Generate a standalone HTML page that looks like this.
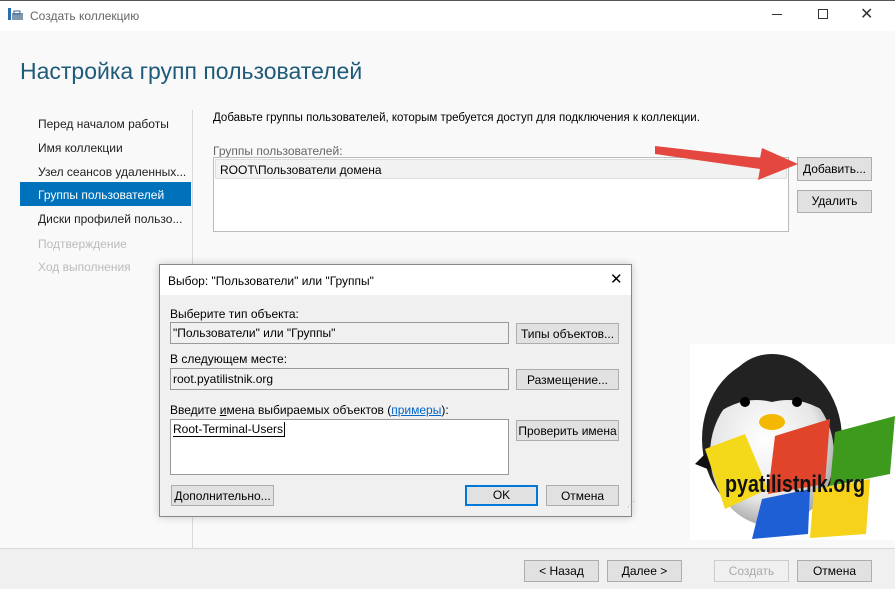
<!DOCTYPE html>
<html><head><meta charset="utf-8"><style>
*{margin:0;padding:0;box-sizing:border-box}
body{width:895px;height:589px;overflow:hidden;font-family:"Liberation Sans","Noto Sans CJK SC",sans-serif;font-size:12px;color:#000;background:#f9f9f9;position:relative}
.a{position:absolute}
.btn{position:absolute;background:#e1e1e1;border:1px solid #adadad;text-align:center;font-size:12px;line-height:20px;color:#000}
.nav{position:absolute;left:38px;font-size:12px;color:#222}
</style></head><body>
<div class="a" style="left:0;top:0;width:895px;height:1px;background:#555"></div>
<div class="a" style="left:0;top:1px;width:895px;height:30px;background:#fff"></div>
<svg class="a" style="left:8px;top:8px" width="15" height="13"><rect x="0" y="0" width="3" height="12" fill="#2a6fb0"/><rect x="4" y="5" width="11" height="7" fill="#7f98ad"/><rect x="6" y="3" width="6" height="3" fill="none" stroke="#3a6a96"/></svg>
<div class="a" style="left:30px;top:9px;color:#666;font-size:12px">Создать коллекцию</div>
<div class="a" style="left:772px;top:14px;width:10px;height:1px;background:#333"></div>
<div class="a" style="left:818px;top:9px;width:10px;height:10px;border:1px solid #333"></div>
<div class="a" style="left:860px;top:4px;font-size:16px;color:#333">✕</div>
<div class="a" style="left:20px;top:58px;font-size:23px;color:#1e5a7a">Настройка групп пользователей</div>
<div class="a" style="left:192px;top:110px;width:1px;height:440px;background:#d9d9d9"></div>
<div class="nav" style="top:117px">Перед началом работы</div>
<div class="nav" style="top:141px">Имя коллекции</div>
<div class="nav" style="top:165px">Узел сеансов удаленных...</div>
<div class="a" style="left:20px;top:182px;width:171px;height:24px;background:#0072bc"></div>
<div class="nav" style="top:188px;color:#fff">Группы пользователей</div>
<div class="nav" style="top:212px">Диски профилей пользо...</div>
<div class="nav" style="top:237px;color:#bbb">Подтверждение</div>
<div class="nav" style="top:260px;color:#bbb">Ход выполнения</div>
<div class="a" style="left:213px;top:112px;font-size:11.5px">Добавьте группы пользователей, которым требуется доступ для подключения к коллекции.</div>
<div class="a" style="left:213px;top:144px;color:#666">Группы пользователей:</div>
<div class="a" style="left:213px;top:157px;width:576px;height:75px;background:#fff;border:1px solid #bbb"></div>
<div class="a" style="left:215px;top:159px;width:572px;height:20px;background:#f2f2f2;border:1px solid #ddd"></div>
<div class="a" style="left:220px;top:163px">ROOT\Пользователи домена</div>
<div class="btn" style="left:797px;top:157px;width:75px;height:24px;line-height:22px">Добавить...</div>
<div class="btn" style="left:797px;top:190px;width:75px;height:23px;line-height:21px">Удалить</div>
<svg class="a" style="left:650px;top:140px" width="150" height="45"><polygon points="5,6 110,18 112,8 148,24 108,40 110,29 5,14" fill="#e4473f"/></svg>
<div class="a" style="left:0;top:548px;width:895px;height:1px;background:#d9d9d9"></div>
<div class="a" style="left:0;top:549px;width:895px;height:40px;background:#f0f0f0"></div>
<div class="btn" style="left:524px;top:560px;width:75px;height:22px">&lt; Назад</div>
<div class="btn" style="left:607px;top:560px;width:75px;height:22px">Далее &gt;</div>
<div class="btn" style="left:714px;top:560px;width:75px;height:22px;color:#aaa;background:#f0f0f0;border-color:#ccc">Создать</div>
<div class="btn" style="left:797px;top:560px;width:75px;height:22px">Отмена</div>
<!-- dialog -->
<div class="a" style="left:159px;top:264px;width:473px;height:253px;background:#f0f0f0;border:1px solid #888;box-shadow:0 0 8px rgba(0,0,0,.2)"></div>
<div class="a" style="left:160px;top:265px;width:471px;height:30px;background:#fff"></div>
<div class="a" style="left:168px;top:274px">Выбор: "Пользователи" или "Группы"</div>
<div class="a" style="left:610px;top:270px;font-size:15px">✕</div>
<div class="a" style="left:170px;top:307px">Выберите тип объекта:</div>
<div class="a" style="left:170px;top:322px;width:339px;height:22px;border:1px solid #999;background:#f0f0f0;padding:3px 2px">"Пользователи" или "Группы"</div>
<div class="btn" style="left:516px;top:323px;width:103px;height:21px">Типы объектов...</div>
<div class="a" style="left:170px;top:352px">В следующем месте:</div>
<div class="a" style="left:170px;top:368px;width:339px;height:22px;border:1px solid #999;background:#f0f0f0;padding:3px 2px">root.pyatilistnik.org</div>
<div class="btn" style="left:516px;top:369px;width:103px;height:21px">Размещение...</div>
<div class="a" style="left:170px;top:403px">Введите <u>и</u>мена выбираемых объектов (<span style="color:#0066cc;text-decoration:underline">примеры</span>):</div>
<div class="a" style="left:170px;top:419px;width:339px;height:56px;border:1px solid #999;background:#fff"></div>
<div class="a" style="left:173px;top:422px;border-bottom:1px solid #000;border-right:1px solid #000;padding-right:1px">Root-Terminal-Users</div>
<div class="btn" style="left:516px;top:420px;width:103px;height:21px">Проверить имена</div>
<div class="btn" style="left:171px;top:485px;width:103px;height:21px">Дополнительно...</div>
<div class="btn" style="left:465px;top:485px;width:73px;height:21px;border:2px solid #0078d7;line-height:17px">OK</div>
<div class="btn" style="left:546px;top:485px;width:73px;height:21px">Отмена</div>
<!-- logo -->
<div class="a" style="left:690px;top:344px;width:205px;height:196px;background:#fff"></div>
<svg class="a" style="left:690px;top:344px" width="205" height="196">
<defs><radialGradient id="g" cx="0.45" cy="0.4" r="0.6"><stop offset="0" stop-color="#fff"/><stop offset="0.7" stop-color="#e6e6e6"/><stop offset="1" stop-color="#aaa"/></radialGradient></defs>
<ellipse cx="82" cy="95" rx="70" ry="82" fill="#222"/>
<polygon points="5,120 30,95 30,130" fill="#111"/><polygon points="158,118 135,95 138,130" fill="#111"/>
<ellipse cx="82" cy="110" rx="62" ry="72" fill="url(#g)"/>
<path d="M20 75 Q40 10 82 10 Q125 10 145 75 Q115 50 82 58 Q50 50 20 75Z" fill="#222"/>
<circle cx="55" cy="58" r="5" fill="#000"/><circle cx="107" cy="58" r="5" fill="#000"/>
<ellipse cx="82" cy="78" rx="13" ry="8" fill="#f5b800"/>
<polygon points="85,92 140,75 135,140 78,150" fill="#e0442a"/>
<polygon points="145,88 205,72 200,130 140,142" fill="#3d9a1c"/>
<polygon points="15,105 55,90 78,145 35,165" fill="#f4d81a"/>
<polygon points="72,155 120,145 118,190 62,195" fill="#1f5fd6"/>
<polygon points="124,145 180,135 176,190 120,194" fill="#f6d21a"/>
<text x="35" y="148" font-family="Liberation Sans" font-weight="bold" font-size="24" fill="#111" textLength="140" lengthAdjust="spacingAndGlyphs">pyatilistnik.org</text>
</svg>
<div class="a" style="left:627px;top:500px;width:4px;height:14px;color:#999;font-size:8px">⋰</div>
</body></html>
